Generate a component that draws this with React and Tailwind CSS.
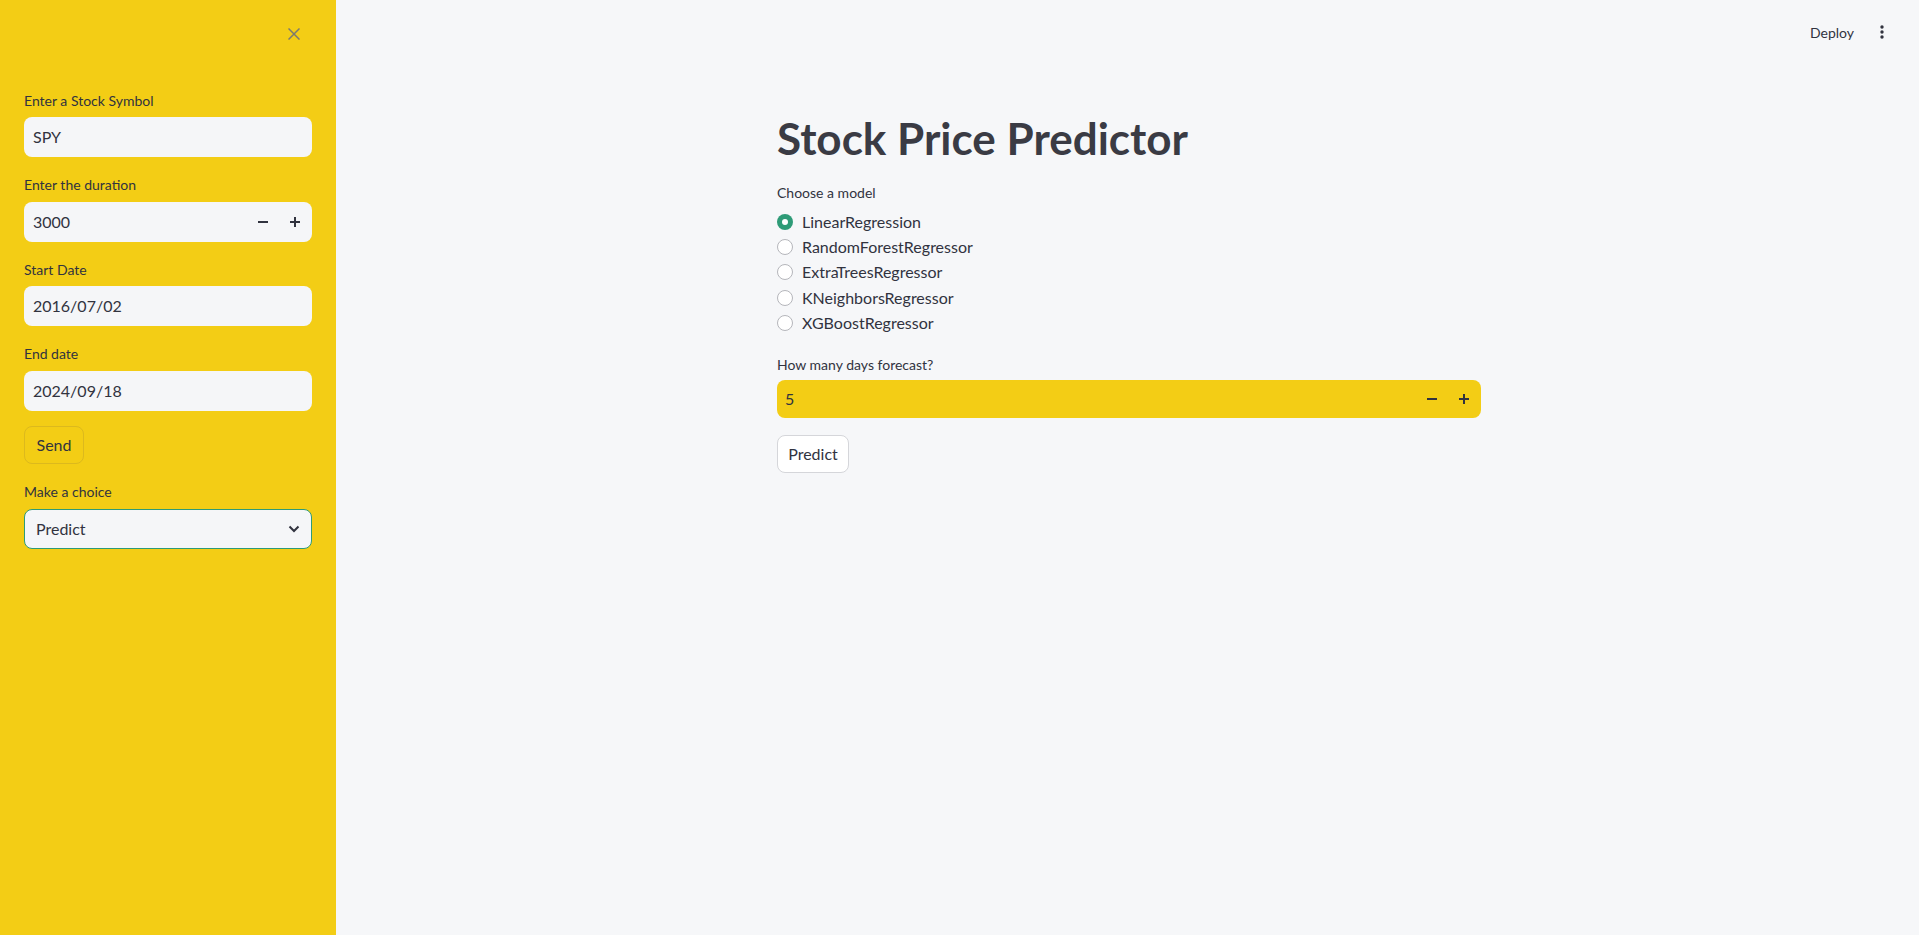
import React, { useState } from "react";

const models = [
    "LinearRegression",
    "RandomForestRegressor",
    "ExtraTreesRegressor",
    "KNeighborsRegressor",
    "XGBoostRegressor",
];

const font = { fontFamily: "Lato, 'Open Sans', sans-serif" };

// Small minus / plus stepper used by the number inputs
const Stepper = () => (
    <div className="flex items-center text-[#31333f]">
        <button className="w-8 h-8 flex items-center justify-center">
            <svg width="10" height="10" viewBox="0 0 10 10">
                <rect x="0" y="4" width="10" height="2" fill="currentColor" />
            </svg>
        </button>
        <button className="w-8 h-8 flex items-center justify-center">
            <svg width="10" height="10" viewBox="0 0 10 10">
                <rect x="0" y="4" width="10" height="2" fill="currentColor" />
                <rect x="4" y="0" width="2" height="10" fill="currentColor" />
            </svg>
        </button>
    </div>
);

const Field = ({ label, children }) => (
    <div className="flex flex-col">
        <label className="text-[14px] text-[#31333f] h-[24px] mb-[5px] flex items-center">{label}</label>
        {children}
    </div>
);

const Sidebar = () => (
    <aside className="w-[336px] shrink-0 bg-[#f3cd15] min-h-screen px-6">
        {/* Close button */}
        <div className="h-[66px] flex justify-end items-start pt-[28px] pr-[12px]">
            <svg width="12" height="12" viewBox="0 0 12 12" stroke="#7b7a70" strokeWidth="1.5">
                <path d="M0.5 0.5 L11.5 11.5 M11.5 0.5 L0.5 11.5" />
            </svg>
        </div>

        <div className="flex flex-col gap-[15.5px] pt-[22px]">
            <Field label="Enter a Stock Symbol">
                <div className="h-10 bg-[#f5f6f8] rounded-lg flex items-center px-[9px] text-[16px] text-[#31333f]">SPY</div>
            </Field>
            <Field label="Enter the duration">
                <div className="h-10 bg-[#f5f6f8] rounded-lg flex items-center pl-[9px] pr-[1px] text-[16px] text-[#31333f] justify-between">
                    <span>3000</span>
                    <Stepper />
                </div>
            </Field>
            <Field label="Start Date">
                <div className="h-10 bg-[#f5f6f8] rounded-lg flex items-center px-[9px] text-[16px] text-[#31333f]">2016/07/02</div>
            </Field>
            <Field label="End date">
                <div className="h-10 bg-[#f5f6f8] rounded-lg flex items-center px-[9px] text-[16px] text-[#31333f]">2024/09/18</div>
            </Field>
            <div>
                <button className="h-[38px] w-[60px] rounded-lg border border-[#dcb91d] text-[16px] text-[#31333f]">Send</button>
            </div>
            <Field label="Make a choice">
                <div className="h-10 bg-[#f5f6f8] rounded-lg border border-[#2e9b77] flex items-center justify-between pl-[11px] pr-[11px] text-[16px] text-[#31333f]">
                    <span>Predict</span>
                    <svg width="12" height="8" viewBox="0 0 12 8" fill="none" stroke="#31333f" strokeWidth="2">
                        <path d="M1.5 1.5 L6 6 L10.5 1.5" />
                    </svg>
                </div>
            </Field>
        </div>
    </aside>
);

const App = () => {
    const [model, setModel] = useState(models[0]);

    return (
        <div className="flex w-full min-h-screen bg-[#f6f7f9]" style={font}>
            <Sidebar />

            <main className="flex-1 flex flex-col">
                {/* Top bar */}
                <div className="h-[64px] flex items-center justify-end pr-[35px] gap-[26px] text-[14px] text-[#31333f]">
                    <span>Deploy</span>
                    <svg width="4" height="16" viewBox="0 0 4 16" fill="#31333f">
                        <circle cx="2" cy="3" r="1.7" />
                        <circle cx="2" cy="8" r="1.7" />
                        <circle cx="2" cy="13" r="1.7" />
                    </svg>
                </div>

                <div className="w-[704px] ml-[441px] flex flex-col">
                    <h1 className="text-[44px] font-bold text-[#3a3b44] leading-none mt-[52px] mb-[21px]">Stock Price Predictor</h1>

                    <div className="text-[14px] text-[#31333f] h-[22px] flex items-center">Choose a model</div>
                    <div className="flex flex-col mt-[6px]">
                        {models.map((m) => (
                            <label key={m} className="flex items-center gap-[9px] h-[25.3px] cursor-pointer" onClick={() => setModel(m)}>
                                {model === m ? (
                                    <span className="w-4 h-4 rounded-full bg-[#2e9b77] flex items-center justify-center">
                                        <span className="w-[6px] h-[6px] rounded-full bg-white" />
                                    </span>
                                ) : (
                                    <span className="w-4 h-4 rounded-full border border-[#b5b6bb] bg-white" />
                                )}
                                <span className="text-[16px] text-[#31333f]">{m}</span>
                            </label>
                        ))}
                    </div>

                    <div className="text-[14px] text-[#31333f] h-[22px] flex items-center mt-[18px]">How many days forecast?</div>
                    <div className="h-[38px] mt-[5px] bg-[#f3cd15] rounded-lg flex items-center justify-between pl-[8px] pr-[1px] text-[16px] text-[#31333f]">
                        <span>5</span>
                        <Stepper />
                    </div>

                    <div className="mt-[17px]">
                        <button className="h-[38px] w-[72px] rounded-lg border border-[#d5d6da] bg-white text-[16px] text-[#31333f]">Predict</button>
                    </div>
                </div>
            </main>
        </div>
    );
};

export default App;
